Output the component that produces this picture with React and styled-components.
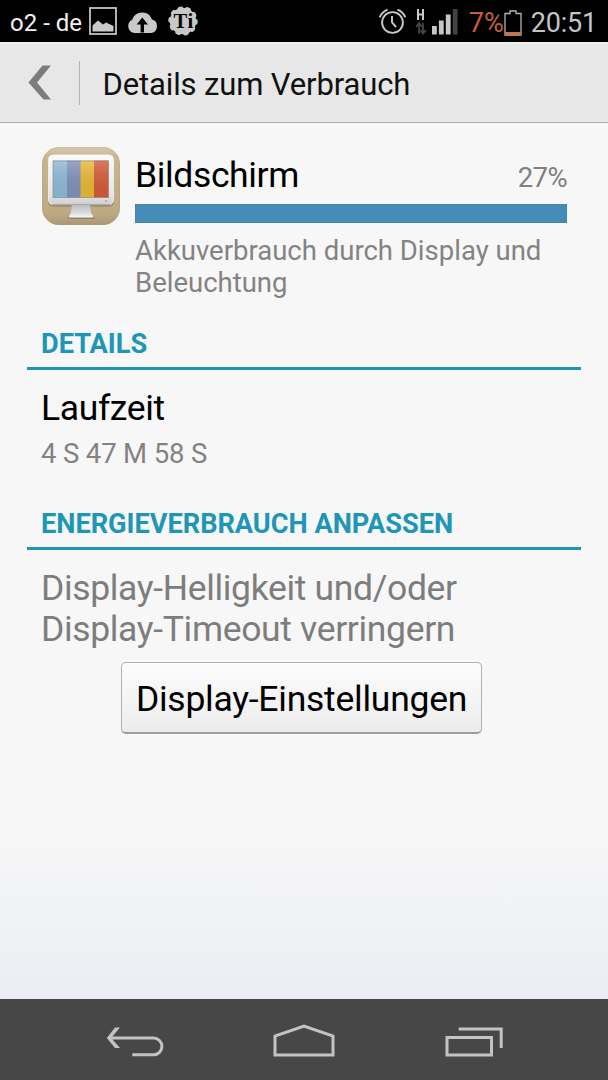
import React from "react";
import styled, { createGlobalStyle } from "styled-components";

const usage = {
  name: "Bildschirm",
  percent: 27,
  info: "Akkuverbrauch durch Display und Beleuchtung",
};

const AppIcon = () => (
  <svg width="80" height="80" viewBox="0 0 80 80">
    <defs>
      <linearGradient id="wood" x1="0" y1="0" x2="0" y2="1">
        <stop offset="0" stopColor="#d9cbb0" />
        <stop offset="0.12" stopColor="#c9b692" />
        <stop offset="0.85" stopColor="#bda983" />
        <stop offset="1" stopColor="#aa9877" />
      </linearGradient>
      <linearGradient id="frame" x1="0" y1="0" x2="0" y2="1">
        <stop offset="0" stopColor="#fafafa" />
        <stop offset="0.8" stopColor="#e4e4e4" />
        <stop offset="1" stopColor="#cfcfd0" />
      </linearGradient>
      <linearGradient id="stand" x1="0" y1="0" x2="0" y2="1">
        <stop offset="0" stopColor="#b3b4b7" />
        <stop offset="0.6" stopColor="#d4d6d9" />
        <stop offset="1" stopColor="#eeeeee" />
      </linearGradient>
      <linearGradient id="shine" x1="0" y1="0" x2="0" y2="1">
        <stop offset="0" stopColor="#fff" stopOpacity="0.2" />
        <stop offset="1" stopColor="#000" stopOpacity="0.05" />
      </linearGradient>
    </defs>
    <rect x="1" y="1" width="78" height="78" rx="17" fill="url(#wood)" />
    <rect x="1.6" y="1.6" width="76.8" height="76.8" rx="16.5" fill="none" stroke="#a99878" strokeOpacity="0.25" />
    <rect x="7" y="11" width="66" height="50" rx="5" fill="#8d7c5c" opacity="0.55" />
    <path d="M31 58H49L50 68L54 73H26L31 68Z" fill="#7d6d50" opacity="0.6" />
    <path d="M31 57H49L50 66L52 71H28L30 66Z" fill="url(#stand)" />
    <path d="M28 69.5H52V71.5H28Z" fill="#f3f3f3" />
    <rect x="7.5" y="9" width="65" height="49.5" rx="4.5" fill="url(#frame)" stroke="#f7f7f7" strokeWidth="0.8" />
    <path d="M11 58.5H69" stroke="#a9a9aa" strokeWidth="1" />
    <rect x="12" y="14.5" width="14.5" height="37" fill="#8dbbd8" />
    <rect x="26" y="14.5" width="14" height="37" fill="#8191bb" />
    <rect x="39.5" y="14.5" width="14" height="37" fill="#e9b935" />
    <rect x="53" y="14.5" width="14.5" height="37" fill="#d65a36" />
    <rect x="12" y="14.5" width="55.5" height="37" fill="url(#shine)" />
    <rect x="12" y="15" width="55.5" height="36.5" fill="none" stroke="#6f7580" strokeOpacity="0.5" />
    <circle cx="65" cy="55" r="1" fill="#aaa" />
  </svg>
);

const PictureIcon = () => (
  <svg width="28" height="28" viewBox="0 0 28 28">
    <rect x="1" y="1" width="26" height="26" fill="none" stroke="#c4c4c4" strokeWidth="1.8" />
    <path d="M3.5 24.5V18.5L9 13.5L14 17.5L17 15.5L24.5 19V24.5Z" fill="#cacaca" />
  </svg>
);

const CloudIcon = () => (
  <svg width="31" height="26" viewBox="0 0 31 26">
    <path d="M7 25A7 7 0 0 1 5.2 11.8A10.4 10.4 0 0 1 25 11.5A6.9 6.9 0 0 1 23.8 25Z" fill="#cacaca" />
    <path d="M15.3 9.5L21 16.5H17V24.5H13.6V16.5H9.6Z" fill="#000" />
  </svg>
);

const GearIcon = () => (
  <svg width="30" height="32" viewBox="0 0 30 32">
    <circle cx="15" cy="16" r="13.2" fill="#c8c8c8" />
    <circle cx="15" cy="16" r="12.7" fill="none" stroke="#c8c8c8" strokeWidth="4" strokeLinecap="round" strokeDasharray="1.8 6.18" />
    <text x="15.6" y="22.5" textAnchor="middle" fontFamily="'Liberation Serif', serif" fontWeight="bold" fontSize="20.5" letterSpacing="0.6" fill="#050505">Ti</text>
  </svg>
);

const AlarmIcon = () => (
  <svg width="28" height="28" viewBox="0 0 28 28" fill="none" stroke="#c8c8c8">
    <circle cx="14.5" cy="15.5" r="10.4" strokeWidth="1.9" />
    <path d="M14 9V15.5L18 20" strokeWidth="1.9" />
    <path d="M1.7 10.3Q4 5 9.5 2.7M19.5 2.7Q25 5 27.3 10.3" strokeWidth="2" />
  </svg>
);

const SignalIcon = () => (
  <svg width="42" height="27" viewBox="0 0 42 27">
    <path d="M2 1V12M7 1V12M2 6.5H7" stroke="#c8c8c8" strokeWidth="2" fill="none" />
    <path d="M3 25.5V16M0 19L3 15L6 19M7 15V24.5M4.5 22L7 25.5L10 22" stroke="#454545" strokeWidth="1.8" fill="none" />
    <path d="M16 18H20.8V26.5H16ZM22.9 12.5H27.7V26.5H22.9ZM29.8 6.5H34.6V26.5H29.8Z" fill="#c8c8c8" />
    <path d="M36.8 1H41.6V26.5H36.8Z" fill="#424242" />
  </svg>
);

const BatteryIcon = () => (
  <svg width="18" height="26" viewBox="0 0 18 26">
    <path d="M1 25V3.5H6V1H12V3.5H17V25Z" fill="none" stroke="#b5b5b5" strokeWidth="1.3" />
    <path d="M1 22H17V25.5H1Z" fill="#c27548" />
  </svg>
);

const BackChevron = () => (
  <svg width="24" height="35" viewBox="0 0 24 35">
    <path d="M14.5 0.5H23L9 17.5L23 34.5H15.5L0.5 17.5Z" fill="#7c7c7c" />
  </svg>
);

const BackKey = () => (
  <svg width="58" height="32" viewBox="0 0 58 32" fill="none" stroke="#c3c3c3" strokeWidth="3">
    <path d="M3 13H47.5A8.4 8.4 0 0 1 47.5 29.8H26.3" />
    <path d="M9 2.5H14L5.2 12.9L14 23H9L0.8 12.9Z" fill="#c3c3c3" stroke="none" />
  </svg>
);

const HomeKey = () => (
  <svg width="62" height="34" viewBox="0 0 62 34">
    <path d="M2 31V12L31 2.2L60 12V31Z" fill="none" stroke="#c3c3c3" strokeWidth="3" />
  </svg>
);

const RecentKey = () => (
  <svg width="60" height="32" viewBox="0 0 60 32" fill="none" stroke="#c3c3c3" strokeWidth="3">
    <rect x="4" y="12.5" width="44.5" height="17.5" />
    <path d="M15.7 4H58.2V23" />
  </svg>
);

const App = () => {
  return (
    <>
      <GlobalStyle />
      <Screen>
        <StatusBar>
          <StatusGroup>
            <Carrier>o2 - de</Carrier>
            <PictureIcon />
            <CloudIcon />
            <GearIcon />
          </StatusGroup>
          <StatusGroup>
            <AlarmIcon />
            <SignalIcon />
            <BatteryLevel>
              7%
              <BatteryIcon />
            </BatteryLevel>
            <Clock>20:51</Clock>
          </StatusGroup>
        </StatusBar>
        <Header>
          <BackButton aria-label="Zurück">
            <BackChevron />
          </BackButton>
          <Heading>Details zum Verbrauch</Heading>
        </Header>
        <Content>
          <Summary>
            <AppIcon />
            <SummaryBody>
              <SummaryTop>
                <Title>{usage.name}</Title>
                <Percent>{usage.percent}%</Percent>
              </SummaryTop>
              <Bar />
              <Info>{usage.info}</Info>
            </SummaryBody>
          </Summary>
          <Section>
            <SectionHeading>DETAILS</SectionHeading>
            <Title as="h3">Laufzeit</Title>
            <Value>4 S 47 M 58 S</Value>
          </Section>
          <Section>
            <SectionHeading>ENERGIEVERBRAUCH ANPASSEN</SectionHeading>
            <Hint>Display-Helligkeit und/oder Display-Timeout verringern</Hint>
            <SettingsButton>Display-Einstellungen</SettingsButton>
          </Section>
        </Content>
        <NavBar>
          <NavKey aria-label="Zurück"><BackKey /></NavKey>
          <NavKey aria-label="Start"><HomeKey /></NavKey>
          <NavKey aria-label="Letzte Apps"><RecentKey /></NavKey>
        </NavBar>
      </Screen>
    </>
  );
};

const GlobalStyle = createGlobalStyle`
*{
  box-sizing:border-box;
}
body{
  margin:0;
  font-family: Roboto, sans-serif;
}
h1,h2,h3,p{
  margin:0;
  font-weight:400;
}
button{
  font-family:inherit;
  padding:0;
  border:none;
  background:none;
}
svg{
  display:block;
  flex-shrink:0;
}
`;

const Screen = styled.div`
width:608px;
height:1080px;
display:flex;
flex-direction:column;
overflow:hidden;
background: linear-gradient(#f7f7f7 0, #f7f7f7 830px, #ebedf3 999px);
`;

const StatusBar = styled.div`
height:42px;
padding:0 11px 0 10px;
display:flex;
justify-content:space-between;
align-items:center;
background-color:#000;
`;

const StatusGroup = styled.div`
display:flex;
align-items:center;
gap:10px;
`;

const Carrier = styled.span`
font-size:24px;
line-height:28px;
margin:3px -3px 0 0;
color:#f2f2f2;
`;

const BatteryLevel = styled.span`
display:flex;
align-items:center;
font-size:27px;
line-height:30px;
color:#c2603c;
margin:3px -1px 0 1px;
`;

const Clock = styled.span`
font-size:27px;
line-height:30px;
letter-spacing:-0.2px;
margin-top:3px;
color:#c4c4c4;
`;

const Header = styled.header`
height:81px;
display:flex;
align-items:center;
background-color:#e7e7e7;
border-top:2px solid #f0f0f0;
border-bottom:1px solid #aeaeae;
`;

const BackButton = styled.button`
width:80px;
height:44px;
padding:0 0 2px 28px;
display:flex;
align-items:center;
border-right:1px solid #b4b4b4;
`;

const Heading = styled.h1`
font-size:31px;
line-height:36px;
letter-spacing:-0.13px;
padding:4px 0 0 22.5px;
color:#111;
`;

const Content = styled.main`
flex:1;
padding:23px 27px 0;
`;

const Summary = styled.section`
display:flex;
gap:14px;
padding:0 14px;
`;

const SummaryBody = styled.div`
flex:1;
`;

const SummaryTop = styled.div`
display:flex;
justify-content:space-between;
align-items:baseline;
height:58px;
padding-top:8px;
`;

const Title = styled.h2`
font-size:35.5px;
line-height:42px;
letter-spacing:-0.37px;
color:#000;
`;

const Percent = styled.span`
font-size:27.5px;
line-height:32px;
letter-spacing:-0.6px;
color:#808080;
`;

const Bar = styled.div`
height:19px;
background-color:#448bb7;
border:1px solid #4585a8;
`;

const Info = styled.p`
font-size:27.5px;
line-height:32px;
margin-top:12px;
color:#838383;
`;

const Section = styled.section`
h3, > p{
  padding-left:14px;
}
`;

const SectionHeading = styled.h2`
font-size:27.2px;
font-weight:700;
line-height:32px;
letter-spacing:-0.03px;
margin-top:29px;
margin-bottom:17px;
padding:0 14px 7px;
color:#2096b6;
border-bottom:3px solid #2096b6;
`;

const Value = styled.p`
font-size:27.5px;
line-height:32px;
letter-spacing:-0.15px;
margin-top:9px;
margin-bottom:38px;
color:#838383;
`;

const Hint = styled.p`
font-size:35.5px;
line-height:40.5px;
letter-spacing:-0.34px;
max-width:480px;
padding-top:1px;
color:#7d7d7d;
`;

const SettingsButton = styled.button`
display:block;
width:361px;
height:72px;
margin:13px 0 0 94px;
padding-top:2px;
font-size:35.5px;
letter-spacing:-0.25px;
color:#000;
background: linear-gradient(#fdfdfd, #ececec);
border:1px solid #b0b0b0;
border-bottom:2px solid #9e9e9e;
border-radius:5px;
`;

const NavBar = styled.nav`
height:81px;
padding:3px 50px 0;
display:flex;
background-color:#474747;
`;

const NavKey = styled.button`
flex:1;
display:flex;
align-items:center;
justify-content:center;
`;

export default App
